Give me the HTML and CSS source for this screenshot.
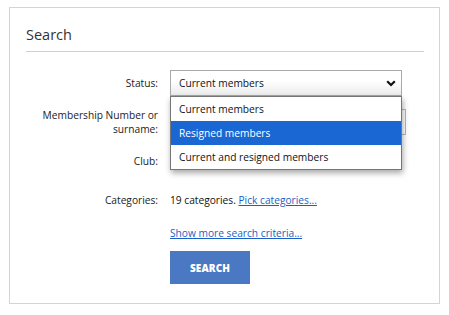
FILE: index.html
```html
<!DOCTYPE HTML>
<html lang="en">
    <head>
        <meta charset="utf-8" />
        <meta name="viewport" content="width=device-width, initial-scale=1.0" />
        <link rel="stylesheet" href="styles.css">
    </head>
    <body>
      <div class="painel">
        <h2 class="titulo">Search</h2>
        <form class="busca">
          <div class="linha linha-status">
            <label>Status:</label>
            <div class="campo">
              <div class="seletor">
                <span>Current members</span>
                <svg class="seta" width="10" height="7" viewBox="0 0 10 7"><polyline points="1.2,1.2 5,5 8.8,1.2" fill="none" stroke="#111" stroke-width="2.2"/></svg>
              </div>
              <ul class="opcoes">
                <li>Current members</li>
                <li class="ativa">Resigned members</li>
                <li>Current and resigned members</li>
              </ul>
            </div>
          </div>
          <div class="linha linha-numero">
            <label>Membership Number or surname:</label>
            <div class="campo"><input type="text" class="texto"></div>
          </div>
          <div class="linha linha-clube">
            <label>Club:</label>
            <div class="campo"></div>
          </div>
          <div class="linha linha-categorias">
            <label>Categories:</label>
            <div class="campo">19 categories. <a href="#">Pick categories...</a></div>
          </div>
          <div class="linha linha-mais">
            <span></span>
            <div class="campo"><a href="#">Show more search criteria...</a></div>
          </div>
          <div class="linha linha-botao">
            <span></span>
            <div class="campo"><button type="button">SEARCH</button></div>
          </div>
        </form>
      </div>
    </body>
</html>
```

FILE: styles.css
```css
body {
  margin: 0;
  padding: 7px 9px 0 9px;
  font-family: "Open Sans", "Noto Sans", sans-serif;
  font-size: 10.2px;
  color: #222222;
  background-color: #ffffff;
}
.painel {
  width: 431px;
  height: 297px;
  box-sizing: border-box;
  border: 1px solid #d4d4d4;
  padding: 0 15px 0 16px;
}
.titulo {
  margin: 0;
  padding: 16px 0 5px 0;
  font-size: 14.5px;
  font-weight: normal;
  line-height: 22px;
  color: #333333;
  border-bottom: 1px solid #d0d0d0;
}

form.busca {
  display: block;
  padding-top: 18px;
}
.linha {
  display: grid;
  grid-template-columns: 132px 1fr;
  column-gap: 12px;
  align-items: center;
}
.linha label {
  text-align: right;
  line-height: 14px;
  color: #222222;
}
.campo {
  position: relative;
  color: #111111;
}

.seletor {
  box-sizing: border-box;
  width: 232px;
  height: 26px;
  border: 1px solid #a9a9a9;
  background: linear-gradient(#ffffff 40%, #ececec);
  display: flex;
  align-items: center;
  justify-content: space-between;
  padding: 0 5px 0 8px;
}
.seta {
  display: block;
}
ul.opcoes {
  position: absolute;
  top: 26px;
  left: 0;
  width: 232px;
  box-sizing: border-box;
  margin: 0;
  padding: 0;
  list-style-type: none;
  background-color: #ffffff;
  border: 1px solid #767676;
  box-shadow: 1px 3px 6px rgba(0, 0, 0, 0.35);
  z-index: 2;
}
ul.opcoes li {
  height: 24px;
  line-height: 24px;
  padding-left: 8px;
}
ul.opcoes li.ativa {
  background-color: #1a67d4;
  color: #ffffff;
}

.linha-numero {
  margin-top: 12px;
}
input.texto {
  display: block;
  box-sizing: border-box;
  width: 236px;
  height: 26px;
  margin: 0;
  border: 1px solid #b8b8b8;
  background-color: #ffffff;
}
.linha-clube {
  margin-top: 12px;
  height: 26px;
}
.linha-categorias {
  margin-top: 13px;
  height: 26px;
}
.linha-mais {
  margin-top: 7px;
  height: 26px;
}
a {
  color: #1a5fc4;
  text-decoration: underline;
}
.linha-botao {
  margin-top: 5px;
}
button {
  display: block;
  width: 80px;
  height: 33px;
  border: 0;
  border-radius: 0;
  background-color: #4a78c2;
  color: #ffffff;
  font-family: "Open Sans", sans-serif;
  font-weight: 800;
  font-size: 10px;
  letter-spacing: 0.1px;
}
```
